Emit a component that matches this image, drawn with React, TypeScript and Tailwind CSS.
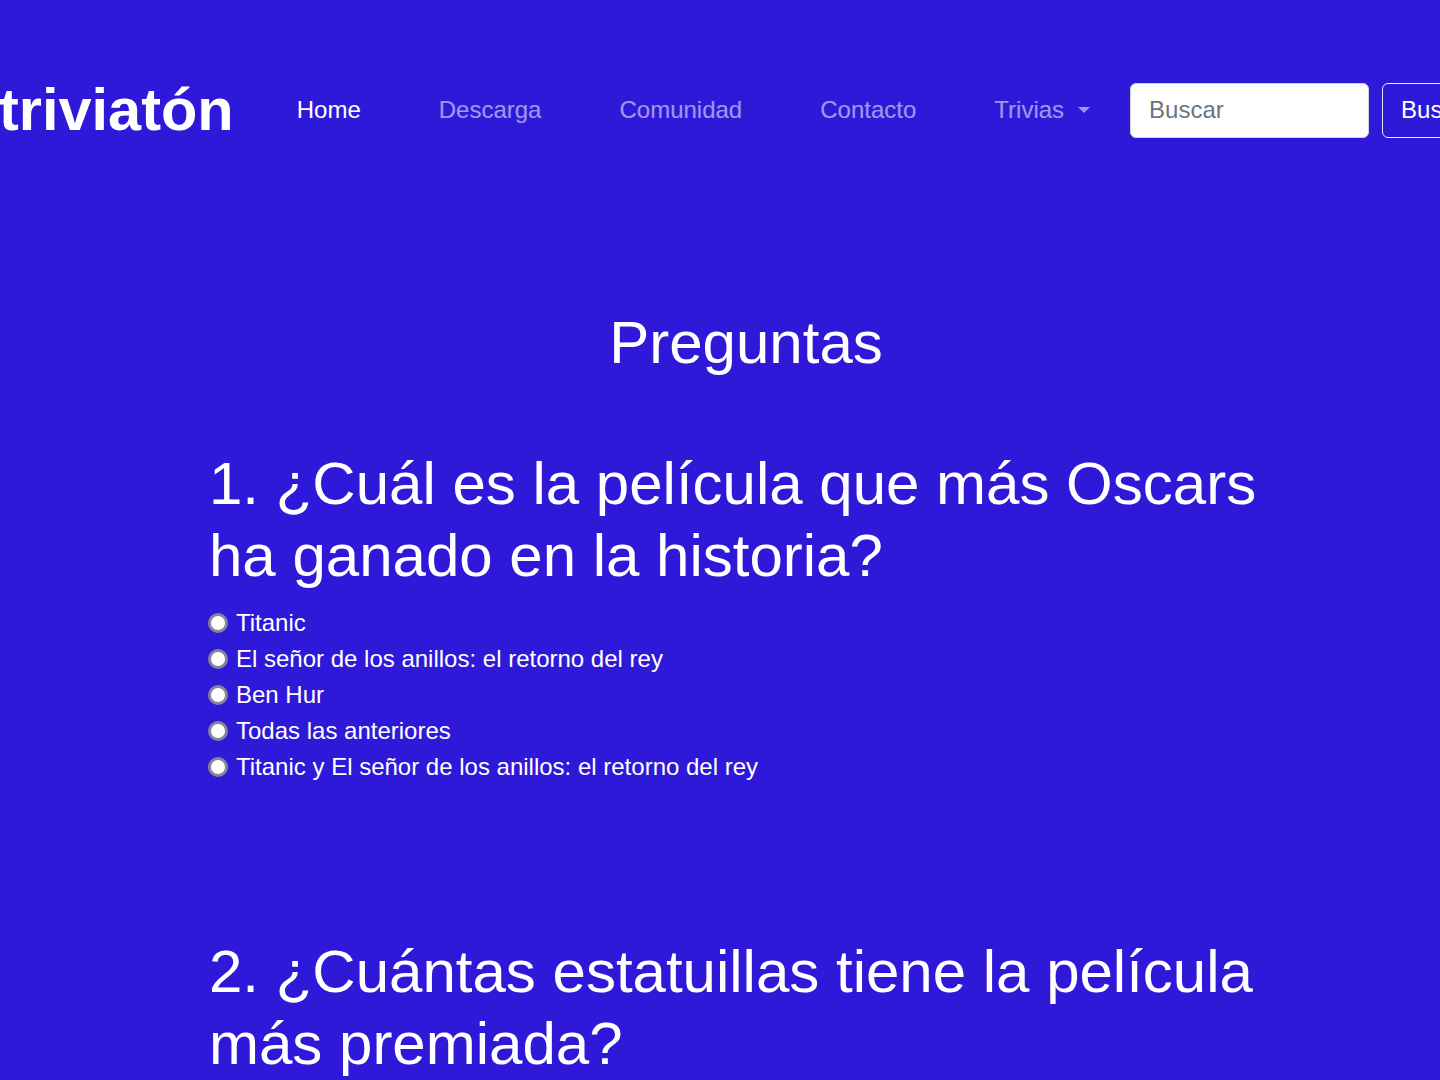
import React from "react";

const links = ["Home", "Descarga", "Comunidad", "Contacto"];

const questions = [
  {
    title: "1. ¿Cuál es la película que más Oscars ha ganado en la historia?",
    options: [
      "Titanic",
      "El señor de los anillos: el retorno del rey",
      "Ben Hur",
      "Todas las anteriores",
      "Titanic y El señor de los anillos: el retorno del rey",
    ],
  },
  {
    title: "2. ¿Cuántas estatuillas tiene la película más premiada?",
    options: ["11", "12", "10", "9"],
  },
];

function Radio({ label }: { label: string }) {
  return (
    <label className="flex items-center gap-2 h-9 text-2xl text-white -ml-px">
      <span className="w-5 h-5 rounded-full bg-white border-[3px] border-[#85849a] shrink-0" />
      <span>{label}</span>
    </label>
  );
}

export default function App() {
  return (
    <div
      className="w-[1440px] h-[1080px] overflow-hidden bg-[#2f19d9] text-white"
      style={{ fontFamily: '"Liberation Sans", Arial, sans-serif' }}
    >
      {/* navbar */}
      <nav className="flex items-center h-14 mt-[82px] w-[1600px]">
        <a className="text-[59.5px] font-bold leading-none mr-[24px] -ml-px">triviatón</a>
        {links.map((l, i) => (
          <a
            key={l}
            className={`px-[39px] text-2xl ${i === 0 ? "text-white" : "text-white/55"}`}
          >
            {l}
          </a>
        ))}
        <a className="px-[39px] text-2xl text-white/55 flex items-center">
          Trivias
          <span className="ml-[14px] w-0 h-0 border-x-[6px] border-x-transparent border-t-[6px] border-t-white/55" />
        </a>
        <input
          placeholder="Buscar"
          className="ml-px w-[239px] h-[55px] rounded-md bg-white px-[18px] text-2xl text-[#212529] placeholder:text-[#6c757d] outline-none border border-[#ced4da]"
        />
        <button className="ml-[13px] h-[55px] px-[18px] rounded-md border border-white/90 text-2xl text-white">
          Buscar
        </button>
      </nav>

      {/* content */}
      <main className="ml-[209px] w-[1074px] pt-[169px]">
        <h1 className="text-[60px] leading-[72px] text-center">Preguntas</h1>
        <div className="mt-[69px] flex flex-col gap-[151px]">
          {questions.map((q) => (
            <section key={q.title}>
              <h2 className="text-[60px] leading-[72px] mb-[13px]">{q.title}</h2>
              <div className="flex flex-col">
                {q.options.map((o) => (
                  <Radio key={o} label={o} />
                ))}
              </div>
            </section>
          ))}
        </div>
      </main>
    </div>
  );
}
